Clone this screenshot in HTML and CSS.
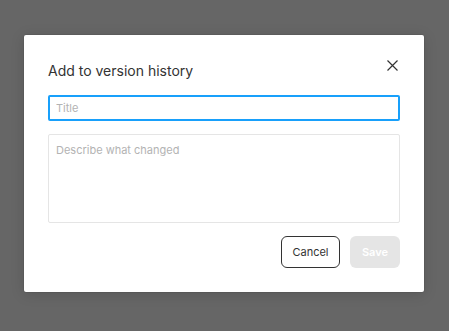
FILE: index.html
```html
<!DOCTYPE html>
<html>
<head>
<meta charset="utf-8">
<link rel="stylesheet" href="styles.css">
</head>
<body>
<div class="overlay">
  <div class="modal">
    <div class="header">
      <h1 class="title">Add to version history</h1>
      <button class="close" aria-label="Close">
        <svg width="11" height="11" viewBox="0 0 11 11"><path d="M0.5 0.5L10.5 10.5M10.5 0.5L0.5 10.5" stroke="#333" stroke-width="1.2" fill="none"/></svg>
      </button>
    </div>
    <input class="field" type="text" placeholder="Title" autofocus>
    <textarea class="area" placeholder="Describe what changed"></textarea>
    <div class="actions">
      <button class="btn cancel">Cancel</button>
      <button class="btn save">Save</button>
    </div>
  </div>
</div>
</body>
</html>
```
FILE: styles.css
```css
html, body {
  margin: 0;
  padding: 0;
  height: 100%;
}
body {
  background: #666666;
  font-family: Inter, "Noto Sans", sans-serif;
}
.overlay {
  padding: 35px 0 0 24px;
}
.modal {
  width: 400px;
  height: 257px;
  box-sizing: border-box;
  background: #fff;
  border-radius: 2px;
  box-shadow: 0 2px 14px rgba(0,0,0,0.15), 0 0 0 0.5px rgba(0,0,0,0.1);
  padding: 24px 24px 0 24px;
  display: flex;
  flex-direction: column;
}
.header {
  display: flex;
  justify-content: space-between;
  align-items: center;
  height: 24px;
}
.title {
  margin: 0;
  font-size: 14px;
  font-weight: 400;
  color: #333;
  line-height: 24px;
}
.close {
  border: 0;
  background: none;
  padding: 0;
  width: 11px;
  height: 11px;
  margin-right: 2px;
  margin-top: -12px;
  display: flex;
}
.field {
  margin-top: 12px;
  height: 26px;
  box-sizing: border-box;
  border: 2px solid #18a0fb;
  border-radius: 2px;
  padding: 0 6px;
  font-family: inherit;
  font-size: 11px;
  color: #333;
  caret-color: #666;
  outline: none;
}
.field::placeholder, .area::placeholder {
  color: #b3b3b3;
}
.area {
  margin-top: 13px;
  height: 89px;
  box-sizing: border-box;
  border: 1px solid #e5e5e5;
  border-radius: 2px;
  padding: 8px 7px;
  font-family: inherit;
  font-size: 11px;
  resize: none;
  outline: none;
}
.actions {
  margin-top: 13px;
  display: flex;
  justify-content: flex-end;
  gap: 10px;
}
.btn {
  height: 32px;
  box-sizing: border-box;
  border-radius: 6px;
  font-family: inherit;
  font-size: 11px;
  padding: 0;
}
.cancel {
  width: 59px;
  background: #fff;
  border: 1px solid #333;
  color: #333;
}
.save {
  width: 50px;
  background: #e5e5e5;
  border: 0;
  color: #fff;
  font-weight: 600;
}
```
